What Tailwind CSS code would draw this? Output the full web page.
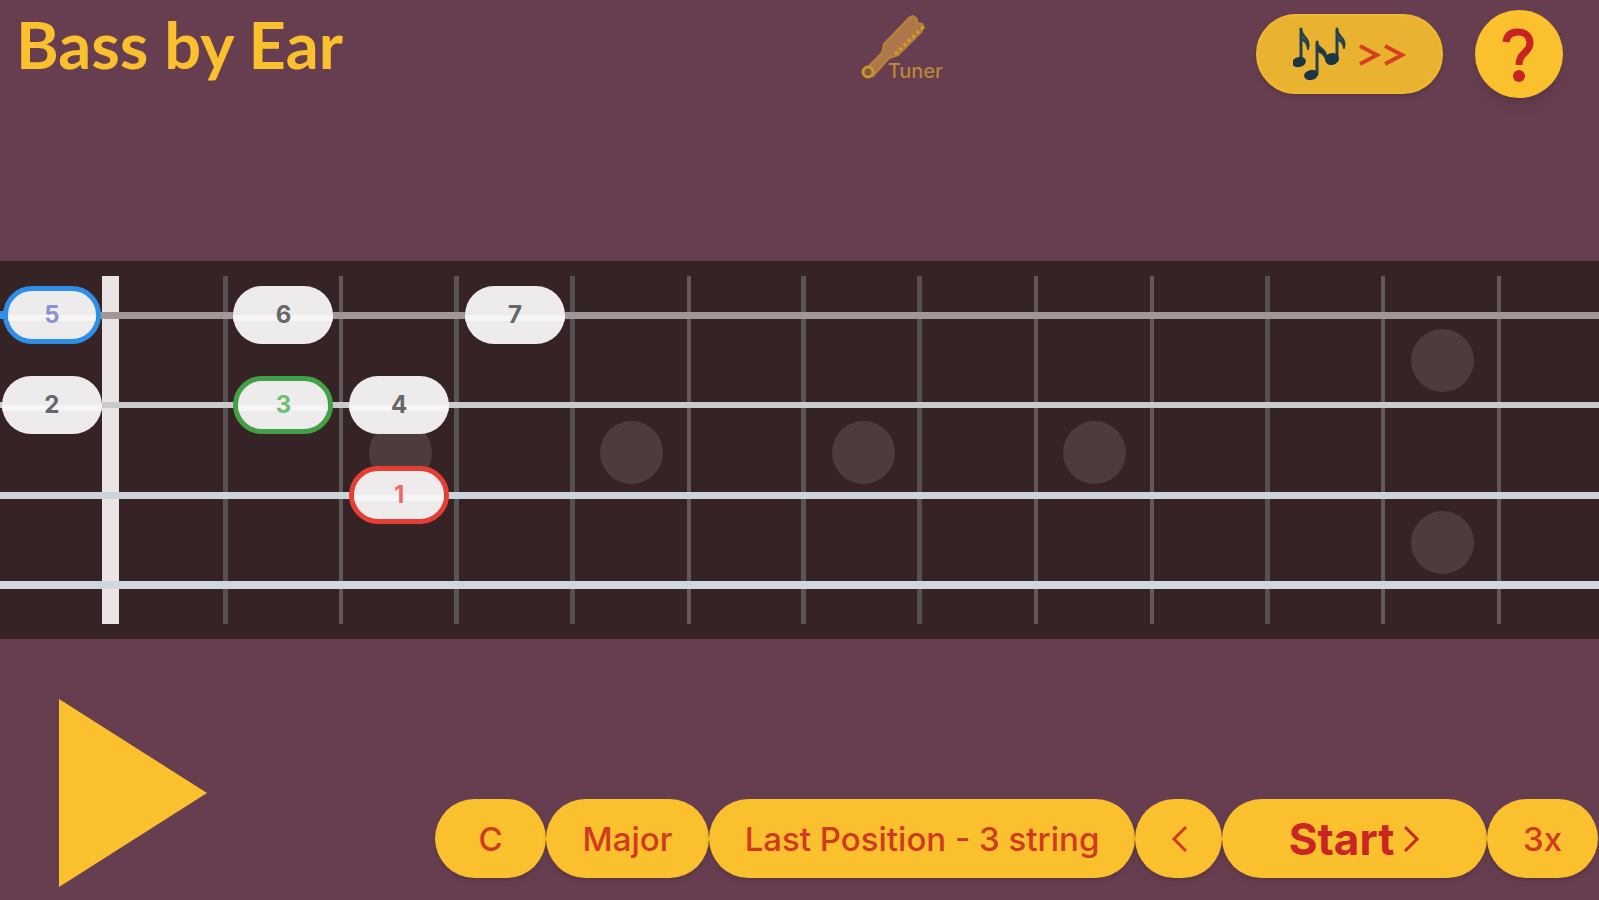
<!DOCTYPE html>
<html lang="en">
<head>
  <meta charset="UTF-8">
  <meta name="viewport" content="width=device-width, initial-scale=1">
  <title>Bass by Ear</title>
  <script src="https://cdn.jsdelivr.net/npm/@tailwindcss/browser@4"></script>
</head>
<body class="min-h-screen flex flex-col overflow-x-hidden bg-[#673e4f] font-[Inter,sans-serif] text-[#d03a20]">

  <header class="flex items-start h-[261px] pr-9">
    <h1 class="w-[55%] pl-4 pt-1 font-[Lato,sans-serif] font-bold text-[65px] leading-[80px] text-[#fbc02d]">Bass by Ear</h1>

    <button class="relative mt-3 w-[86px] h-[70px]" aria-label="Tuner">
      <svg class="w-[70px] h-[70px]" viewBox="0 0 70 70" fill="none">
        <path d="M4 59 L22 41 L24 32 L49 6 L53 4 L57 7 L57 11 L62 12 L64 15 L61 20 L38 43 L29 46 L13 64 Z" fill="#ae7747" stroke="#b98339" stroke-width="2" stroke-linejoin="round"/>
        <circle cx="8" cy="60" r="5" fill="#8a5644" stroke="#c9952e" stroke-width="3"/>
        <path d="M35 42 L63 15" stroke="#d3a030" stroke-width="3" stroke-dasharray="3 3"/>
      </svg>
      <span class="absolute left-7 bottom-px text-[20px] leading-5 font-medium text-[#b9863a]">Tuner</span>
    </button>

    <div class="ml-auto flex items-center gap-8 pt-[10px]">
      <button class="flex items-center justify-center gap-3 w-[187px] h-20 rounded-full bg-[#e9b331] border-2 border-[#f0b830] shadow-md" aria-label="Songs">
        <svg class="w-[54px] h-[54px]" viewBox="0 0 54 54" fill="none" stroke="#263f4c" stroke-linecap="round" stroke-linejoin="round">
          <path d="M8 2 V34" stroke-width="3"/>
          <path d="M8 3 C9 10 18 11 15 22 C14 15 11 13 8 13 Z" fill="#3c5555" stroke-width="2"/>
          <path d="M44 2 V32" stroke-width="3"/>
          <path d="M44 3 C45 10 54 11 51 21 C50 15 47 13 44 13 Z" fill="#3c5555" stroke-width="2"/>
          <path d="M24 15 V47" stroke-width="3"/>
          <path d="M24 16 C25 22 35 22 33 32 C31 27 28 25 24 24 Z" fill="#1f3037" stroke-width="2"/>
          <g fill="#1c3645" stroke="none">
            <ellipse cx="6" cy="35" rx="7" ry="5" transform="rotate(-15 6 35)"/>
            <ellipse cx="39" cy="32" rx="7" ry="6" transform="rotate(-15 39 32)"/>
            <ellipse cx="18" cy="48" rx="7" ry="5" transform="rotate(-15 18 48)"/>
          </g>
        </svg>
        <svg class="w-[48px] h-6" viewBox="0 0 48 24" fill="none" stroke="#d5411f" stroke-width="4">
          <path d="M1 4 L18 13 L1 22 M26 4 L43 13 L26 22"/>
        </svg>
      </button>
      <button class="flex items-center justify-center w-[88px] h-[88px] rounded-full bg-[#fbc02d] shadow-lg" aria-label="Help">
        <svg class="w-[34px] h-[56px]" viewBox="0 0 34 56" fill="none">
          <path d="M4 16 C5 8 10 6 16 6 C24 6 28 11 28 17 C28 27 17 26 17 39" stroke="#c92222" stroke-width="7"/>
          <circle cx="17" cy="50" r="6" fill="#c92222"/>
        </svg>
      </button>
    </div>
  </header>

  <!-- neck: open column, then one column per fret; one row per string -->
  <main class="grid grid-cols-[119fr_109fr_repeat(11,116fr)_98fr] grid-rows-[repeat(4,90px)] items-center justify-items-center py-[9px] bg-[#352325]">
    <div class="row-start-1 row-span-4 col-start-1 self-stretch justify-self-end my-[6px] w-[17px] bg-[#ebe4e5]"></div>
    <div class="row-start-1 row-span-4 col-start-2 self-stretch justify-self-end my-[6px] w-[5px] bg-[#565150]"></div>
    <div class="row-start-1 row-span-4 col-start-3 self-stretch justify-self-end my-[6px] w-1 bg-[#5f5958]"></div>
    <div class="row-start-1 row-span-4 col-start-4 self-stretch justify-self-end my-[6px] w-[5px] bg-[#5a5453]"></div>
    <div class="row-start-1 row-span-4 col-start-5 self-stretch justify-self-end my-[6px] w-[5px] bg-[#565150]"></div>
    <div class="row-start-1 row-span-4 col-start-6 self-stretch justify-self-end my-[6px] w-1 bg-[#5f5958]"></div>
    <div class="row-start-1 row-span-4 col-start-7 self-stretch justify-self-end my-[6px] w-[5px] bg-[#5a5453]"></div>
    <div class="row-start-1 row-span-4 col-start-8 self-stretch justify-self-end my-[6px] w-[5px] bg-[#565150]"></div>
    <div class="row-start-1 row-span-4 col-start-9 self-stretch justify-self-end my-[6px] w-1 bg-[#5f5958]"></div>
    <div class="row-start-1 row-span-4 col-start-10 self-stretch justify-self-end my-[6px] w-1 bg-[#5f5958]"></div>
    <div class="row-start-1 row-span-4 col-start-11 self-stretch justify-self-end my-[6px] w-[5px] bg-[#565150]"></div>
    <div class="row-start-1 row-span-4 col-start-12 self-stretch justify-self-end my-[6px] w-1 bg-[#5f5958]"></div>
    <div class="row-start-1 row-span-4 col-start-13 self-stretch justify-self-end my-[6px] w-1 bg-[#5f5958]"></div>

    <!-- position markers -->
    <div class="row-start-2 row-span-2 col-start-4 mt-1 mr-[2px] size-[63px] rounded-full bg-[#4d3c3d]"></div>
    <div class="row-start-2 row-span-2 col-start-6 mt-1 mr-[2px] size-[63px] rounded-full bg-[#4d3c3d]"></div>
    <div class="row-start-2 row-span-2 col-start-8 mt-1 mr-[2px] size-[63px] rounded-full bg-[#4d3c3d]"></div>
    <div class="row-start-2 row-span-2 col-start-10 mt-1 mr-[2px] size-[63px] rounded-full bg-[#4d3c3d]"></div>
    <div class="row-start-1 row-span-2 col-start-13 mr-[2px] size-[63px] rounded-full bg-[#4d3c3d]"></div>
    <div class="row-start-3 row-span-2 col-start-13 mt-1 mr-[2px] size-[63px] rounded-full bg-[#4d3c3d]"></div>

    <!-- strings -->
    <div class="row-start-1 col-start-1 col-span-14 w-full h-[7px] bg-[#a29797]"></div>
    <div class="row-start-2 col-start-1 col-span-14 w-full h-[6px] bg-[#cac9cc]"></div>
    <div class="row-start-3 col-start-1 col-span-14 w-full h-[7px] bg-[#ccd3d9]"></div>
    <div class="row-start-4 col-start-1 col-span-14 w-full h-[8px] bg-[#d0d7dd]"></div>

    <!-- notes -->
    <div class="row-start-1 col-start-1 justify-self-start w-2 h-2 bg-[#2f8fe6]"></div>
    <button class="relative isolate row-start-1 col-start-1 mr-[15px] w-[98px] h-[58px] rounded-full bg-[#edebeb] border-[5px] border-[#2f8fe6] font-bold text-[24px] leading-6 text-[#8f8fd0] before:absolute before:-z-10 before:inset-x-0 before:top-1/2 before:h-[6px] before:bg-white/50">5</button>
    <button class="relative isolate row-start-1 col-start-3 mr-1 w-[100px] h-[58px] rounded-full bg-[#edebeb] font-bold text-[24px] leading-6 text-[#666] before:absolute before:-z-10 before:inset-x-0 before:top-1/2 before:h-[6px] before:bg-white/50">6</button>
    <button class="relative isolate row-start-1 col-start-5 mr-1 w-[100px] h-[58px] rounded-full bg-[#edebeb] font-bold text-[24px] leading-6 text-[#666] before:absolute before:-z-10 before:inset-x-0 before:top-1/2 before:h-[6px] before:bg-white/50">7</button>
    <button class="relative isolate row-start-2 col-start-1 mr-[15px] w-[100px] h-[58px] rounded-full bg-[#edebeb] font-bold text-[24px] leading-6 text-[#666] before:absolute before:-z-10 before:inset-x-0 before:top-1/2 before:h-[6px] before:bg-white/50">2</button>
    <button class="relative isolate row-start-2 col-start-3 mr-1 w-[100px] h-[58px] rounded-full bg-[#edebeb] border-[5px] border-[#43a047] font-bold text-[24px] leading-6 text-[#6cc070] before:absolute before:-z-10 before:inset-x-0 before:top-1/2 before:h-[6px] before:bg-white/50">3</button>
    <button class="relative isolate row-start-2 col-start-4 mr-1 w-[100px] h-[58px] rounded-full bg-[#edebeb] font-bold text-[24px] leading-6 text-[#666] before:absolute before:-z-10 before:inset-x-0 before:top-1/2 before:h-[6px] before:bg-white/50">4</button>
    <button class="relative isolate row-start-3 col-start-4 mr-1 w-[100px] h-[58px] rounded-full bg-[#edebeb] border-[5px] border-[#e53e35] font-bold text-[24px] leading-6 text-[#ee6a68] before:absolute before:-z-10 before:inset-x-0 before:top-1/2 before:h-[6px] before:bg-white/50">1</button>
  </main>

  <footer class="flex-1 flex items-end justify-between pl-[59px]">
    <button class="mb-[13px]" aria-label="Play">
      <svg class="block w-[148px] h-[188px]" viewBox="0 0 148 188"><path d="M0 0 L148 94 L0 188 Z" fill="#fbc02d"/></svg>
    </button>
    <div class="flex mb-[22px] pr-px text-[33px] leading-10 font-medium">
      <button class="w-[111px] h-[79px] rounded-full bg-[#fbc02d] shadow-md">C</button>
      <button class="w-[163px] h-[79px] rounded-full bg-[#fbc02d] shadow-md">Major</button>
      <button class="w-[426px] h-[79px] rounded-full bg-[#fbc02d] shadow-md whitespace-nowrap">Last Position - 3 string</button>
      <button class="flex items-center justify-center w-[87px] h-[79px] rounded-full bg-[#fbc02d] shadow-md" aria-label="Previous">
        <svg class="w-4 h-7" viewBox="0 0 16 28" fill="none" stroke="currentColor" stroke-width="3"><path d="M15 2 L3 14 L15 26"/></svg>
      </button>
      <button class="flex items-center justify-center gap-[10px] w-[265px] h-[79px] rounded-full bg-[#fbc02d] shadow-md font-bold text-[#c92525]">
        <span class="text-[44px]">Start</span>
        <svg class="w-4 h-7" viewBox="0 0 16 28" fill="none" stroke="currentColor" stroke-width="3"><path d="M1 2 L13 14 L1 26"/></svg>
      </button>
      <button class="w-[111px] h-[79px] rounded-full bg-[#fbc02d] shadow-md">3x</button>
    </div>
  </footer>

</body>
</html>
